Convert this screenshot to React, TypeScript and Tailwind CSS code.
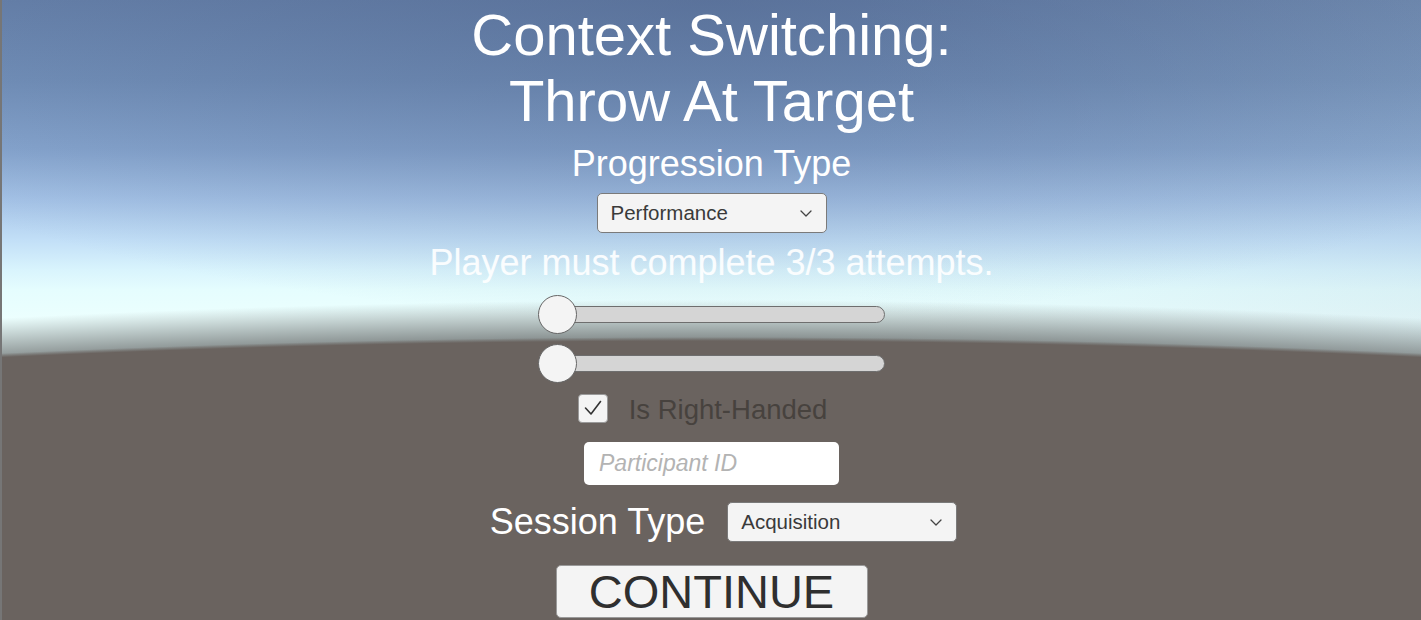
import React from "react";

function Chevron() {
  return (
    <svg width="12" height="7" viewBox="0 0 12 7" fill="none">
      <path d="M1 1 L6 6 L11 1" stroke="#444" strokeWidth="1.3" strokeLinecap="round" strokeLinejoin="round" />
    </svg>
  );
}

function Dropdown({ label }: { label: string }) {
  return (
    <div className="w-[230px] h-[40px] rounded-[5px] border border-[#7a7a7a] bg-[#f4f4f4] pl-[13px] pr-[14px] flex items-center justify-between">
      <span className="text-[20.5px] text-[#3a3a3a] leading-none">{label}</span>
      <Chevron />
    </div>
  );
}

function Slider() {
  return (
    <div className="relative w-[347px] h-[39px] flex items-center">
      <div className="ml-[2px] w-[345px] h-[17px] rounded-full bg-[#d5d5d5] border border-[#6e6e6e]" />
      <div className="absolute left-0 top-0 w-[39px] h-[39px] rounded-full bg-[#f4f4f4] border border-[#666]" />
    </div>
  );
}

export default function App() {
  return (
    <div className="relative w-full h-[620px] overflow-hidden border-l-2 border-[#767676] font-['Liberation_Sans',Arial,sans-serif] bg-[image:radial-gradient(ellipse_2300px_333px_at_50%_670px,#6a635f_98.8%,rgba(106,99,95,0)_100%),radial-gradient(ellipse_2300px_370px_at_50%_670px,rgba(122,128,128,1)_88%,rgba(236,255,254,0)_100%),radial-gradient(ellipse_1000px_320px_at_50%_0,rgba(75,95,135,0.45),rgba(75,95,135,0)),linear-gradient(to_right,rgba(160,185,205,0)_60%,rgba(160,185,205,0.18)_100%),linear-gradient(to_bottom,#6782ab_0px,#7391ba_80px,#87a6cf_150px,#a5c3e7_200px,#c2dff7_240px,#d9f4fd_270px,#e5fdfe_290px,#ecfffe_320px)]">
      <div className="flex flex-col items-center">
        <h1 className="mt-[2px] text-[58px] leading-[66px] text-white text-center font-normal">
          Context Switching:
          <br />
          Throw At Target
        </h1>
        <div className="mt-[10px] text-[36px] leading-[40px] text-white">Progression Type</div>
        <div className="mt-[9px]">
          <Dropdown label="Performance" />
        </div>
        <div className="mt-[10px] text-[36px] leading-[40px] text-white/90">Player must complete 3/3 attempts.</div>
        <div className="mt-[12px]">
          <Slider />
        </div>
        <div className="mt-[10px]">
          <Slider />
        </div>
        <div className="mt-[10px] pr-[18px] flex items-center gap-[21px] h-[30px]">
          <div className="w-[30px] h-[29px] rounded-[4px] bg-[#f4f4f4] border border-[#9a9a9a] flex items-center justify-center">
            <svg width="20" height="18" viewBox="0 0 20 18" fill="none">
              <path d="M2.5 9 L8 15 L17.5 2.5" stroke="#333" strokeWidth="1.6" strokeLinecap="round" strokeLinejoin="round" />
            </svg>
          </div>
          <span className="mt-[4px] text-[27.5px] leading-[30px] text-[#47423e]">Is Right-Handed</span>
        </div>
        <input
          readOnly
          placeholder="Participant ID"
          className="mt-[19px] w-[255px] h-[43px] rounded-[5px] bg-white pl-[15px] text-[23px] italic outline-none placeholder:text-[#b3b3b3] placeholder:italic"
        />
        <div className="mt-[17px] pl-[24px] flex items-center gap-[22px]">
          <span className="text-[36px] leading-[40px] text-white">Session Type</span>
          <Dropdown label="Acquisition" />
        </div>
        <button className="mt-[23px] w-[312px] h-[53px] rounded-[5px] bg-[#f4f4f4] border border-[#9a9a9a] text-[47px] leading-none text-[#2f2f2f]">
          CONTINUE
        </button>
      </div>
    </div>
  );
}
